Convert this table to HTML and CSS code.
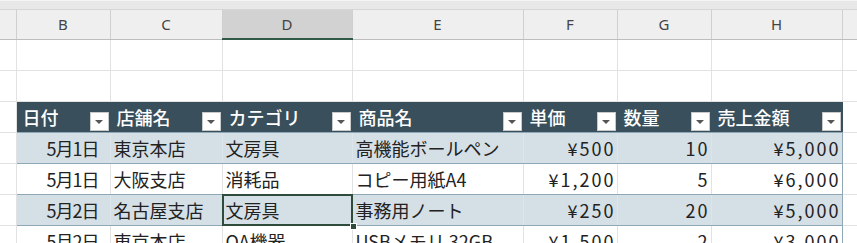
FILE: index.html
```html
<!DOCTYPE html>
<html lang="ja">
<head>
<meta charset="utf-8">
<link rel="stylesheet" href="styles.css">
</head>
<body>
<div class="topband"></div>
<table class="sheet">
  <colgroup>
    <col class="w-a"><col class="w-b"><col class="w-c"><col class="w-d"><col class="w-e"><col class="w-f"><col class="w-g"><col class="w-h"><col class="w-i">
  </colgroup>
  <tr class="colhead">
    <th></th><th>B</th><th>C</th><th class="sel">D</th><th>E</th><th>F</th><th>G</th><th>H</th><th></th>
  </tr>
  <tr class="r"><td></td><td></td><td></td><td></td><td></td><td></td><td></td><td></td><td></td></tr>
  <tr class="r"><td></td><td></td><td></td><td></td><td></td><td></td><td></td><td></td><td></td></tr>
  <tr class="r thead">
    <td class="edge"></td>
    <td class="th"><div class="hc"><span>日付</span><i class="fb"></i></div></td>
    <td class="th"><div class="hc"><span>店舗名</span><i class="fb"></i></div></td>
    <td class="th"><div class="hc"><span>カテゴリ</span><i class="fb"></i></div></td>
    <td class="th"><div class="hc"><span>商品名</span><i class="fb"></i></div></td>
    <td class="th"><div class="hc"><span>単価</span><i class="fb"></i></div></td>
    <td class="th"><div class="hc"><span>数量</span><i class="fb"></i></div></td>
    <td class="th last"><div class="hc"><span>売上金額</span><i class="fb"></i></div></td>
    <td class="edge"></td>
  </tr>
  <tr class="r band">
    <td class="edge"></td>
    <td class="d date first">5月1日</td><td class="d">東京本店</td><td class="d">文房具</td><td class="d">高機能ボールペン</td>
    <td class="d num">¥500</td><td class="d num">10</td><td class="d num last">¥5,000</td>
    <td class="edge"></td>
  </tr>
  <tr class="r plain">
    <td class="edge"></td>
    <td class="d date first">5月1日</td><td class="d">大阪支店</td><td class="d">消耗品</td><td class="d">コピー用紙A4</td>
    <td class="d num">¥1,200</td><td class="d num">5</td><td class="d num last">¥6,000</td>
    <td class="edge"></td>
  </tr>
  <tr class="r band">
    <td class="edge"></td>
    <td class="d date first">5月2日</td><td class="d">名古屋支店</td><td class="d active"><span>文房具</span><i class="frame"></i><i class="handle"></i></td><td class="d">事務用ノート</td>
    <td class="d num">¥250</td><td class="d num">20</td><td class="d num last">¥5,000</td>
    <td class="edge"></td>
  </tr>
  <tr class="r plain">
    <td class="edge"></td>
    <td class="d date first">5月2日</td><td class="d">東京本店</td><td class="d">OA機器</td><td class="d">USBメモリ 32GB</td>
    <td class="d num">¥1,500</td><td class="d num">2</td><td class="d num last">¥3,000</td>
    <td class="edge"></td>
  </tr>
</table>
</body>
</html>
```

FILE: styles.css
```css
html, body {
  margin: 0;
  padding: 0;
  background: #ffffff;
  overflow: hidden;
}
body {
  width: 857px;
  height: 243px;
  font-family: "Noto Sans CJK JP", "Noto Sans", sans-serif;
}
.topband {
  height: 10px;
  background: #e8e8e8;
  border-top: 1px solid #f4f4f4;
  border-bottom: 1px solid #d6d6d6;
  box-sizing: border-box;
}
.sheet {
  border-collapse: collapse;
  table-layout: fixed;
  width: 857px;
}
.w-a { width: 16px; }
.w-b { width: 94px; }
.w-c { width: 112px; }
.w-d { width: 130px; }
.w-e { width: 171px; }
.w-f { width: 94px; }
.w-g { width: 94px; }
.w-h { width: 131px; }
.w-i { width: 15px; }

.colhead th {
  height: 28px;
  padding: 0;
  background: #efefef;
  border-right: 1px solid #cfcfcf;
  border-bottom: 1px solid #bdbdbd;
  font-family: "Noto Sans", "Open Sans", sans-serif;
  font-weight: normal;
  font-size: 15px;
  color: #444444;
  text-align: center;
  vertical-align: middle;
}
.colhead th.sel {
  background: #d2d2d2;
  border-bottom: 2px solid #2f5a47;
}
.r td {
  height: 30px;
  padding: 0;
  border-right: 1px solid #e2e2e2;
  border-bottom: 1px solid #e2e2e2;
  font-size: 18px;
  color: #222222;
  white-space: nowrap;
  overflow: hidden;
}
.thead td.th {
  background: #394f5b;
  color: #ffffff;
  font-weight: 500;
  border-right: 1px solid #394f5b;
  border-top: 1px solid #8ea8b8;
  border-bottom: 1px solid #8ea8b8;
}
.thead td.th:first-of-type { border-left: 1px solid #8ea8b8; }
.hc {
  display: flex;
  align-items: center;
  justify-content: space-between;
  padding-left: 6px;
  padding-right: 1px;
  height: 30px;
}
.hc span { line-height: 1; }
.fb {
  width: 19px;
  height: 19px;
  box-sizing: border-box;
  background: #ffffff;
  border: 1px solid #c9c9c9;
  display: flex;
  align-items: center;
  justify-content: center;
  align-self: flex-end;
  margin-bottom: 1px;
}
.fb::after {
  content: "";
  width: 0;
  height: 0;
  border-left: 4px solid transparent;
  border-right: 4px solid transparent;
  border-top: 4px solid #555555;
  margin-top: 1px;
}
.band td.d { background: #d5dfe6; }
.plain td.d { background: #ffffff; }
.r td.d {
  border-right: none;
  border-bottom: 1px solid #8ea8b8;
  padding: 0 3px;
  vertical-align: middle;
  line-height: 1;
}
.r td.d.first { border-left: 1px solid #8ea8b8; }
.r td.d.last { border-right: 1px solid #8ea8b8; }
.plain td.d + td.d { border-left: 1px solid #e2e2e2; }
.band td.d + td.d { border-left: 1px solid #dce5eb; }
.num {
  text-align: right;
  letter-spacing: 2px;
}
.r td.num { padding-right: 1px; }
.date {
  text-align: right;
  letter-spacing: -1px;
}
.r td.date { padding-right: 11px; }
.r td.active {
  position: relative;
  overflow: visible;
}
.frame {
  position: absolute;
  left: -1px;
  top: -1px;
  right: -1px;
  bottom: -1px;
  border: 2px solid #2f4b3c;
  pointer-events: none;
}
.handle {
  position: absolute;
  right: -5px;
  bottom: -5px;
  width: 7px;
  height: 7px;
  box-sizing: border-box;
  background: #2f4b3c;
  border: 1px solid #ffffff;
  z-index: 2;
}
```
